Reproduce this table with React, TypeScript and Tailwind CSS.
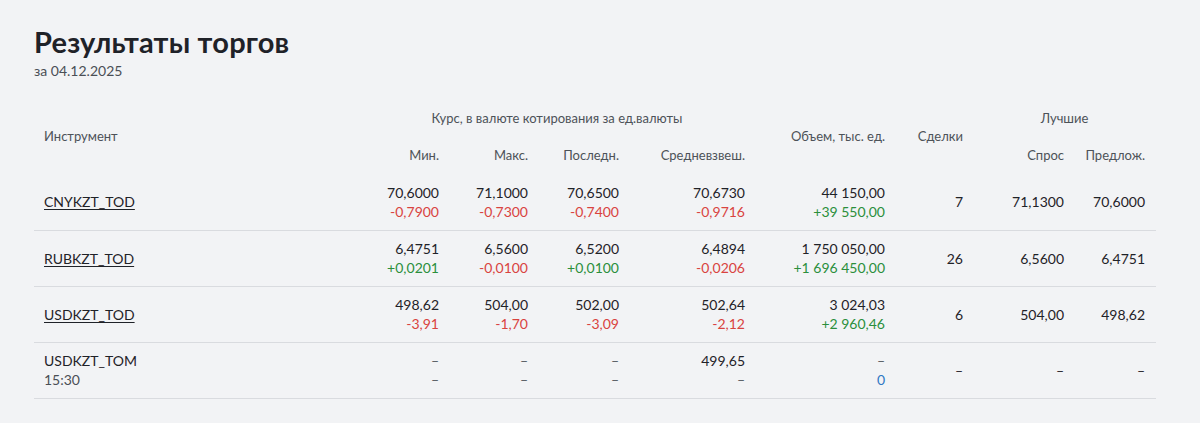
import React from "react";

type Val = { v: string; d: string; dc?: "red" | "green" | "blue" | "gray" };

interface Row {
  name: string;
  sub?: string;
  link: boolean;
  cells: Val[];
  deals: string;
  bid: string;
  ask: string;
}

const rows: Row[] = [
  {
    name: "CNYKZT_TOD",
    link: true,
    cells: [
      { v: "70,6000", d: "-0,7900", dc: "red" },
      { v: "71,1000", d: "-0,7300", dc: "red" },
      { v: "70,6500", d: "-0,7400", dc: "red" },
      { v: "70,6730", d: "-0,9716", dc: "red" },
      { v: "44 150,00", d: "+39 550,00", dc: "green" },
    ],
    deals: "7",
    bid: "71,1300",
    ask: "70,6000",
  },
  {
    name: "RUBKZT_TOD",
    link: true,
    cells: [
      { v: "6,4751", d: "+0,0201", dc: "green" },
      { v: "6,5600", d: "-0,0100", dc: "red" },
      { v: "6,5200", d: "+0,0100", dc: "green" },
      { v: "6,4894", d: "-0,0206", dc: "red" },
      { v: "1 750 050,00", d: "+1 696 450,00", dc: "green" },
    ],
    deals: "26",
    bid: "6,5600",
    ask: "6,4751",
  },
  {
    name: "USDKZT_TOD",
    link: true,
    cells: [
      { v: "498,62", d: "-3,91", dc: "red" },
      { v: "504,00", d: "-1,70", dc: "red" },
      { v: "502,00", d: "-3,09", dc: "red" },
      { v: "502,64", d: "-2,12", dc: "red" },
      { v: "3 024,03", d: "+2 960,46", dc: "green" },
    ],
    deals: "6",
    bid: "504,00",
    ask: "498,62",
  },
  {
    name: "USDKZT_TOM",
    sub: "15:30",
    link: false,
    cells: [
      { v: "–", d: "–", dc: "gray" },
      { v: "–", d: "–", dc: "gray" },
      { v: "–", d: "–", dc: "gray" },
      { v: "499,65", d: "–", dc: "gray" },
      { v: "–", d: "0", dc: "blue" },
    ],
    deals: "–",
    bid: "–",
    ask: "–",
  },
];

const diffColor = (c?: string) => {
  if (c === "red") return "text-[#d9433f]";
  if (c === "green") return "text-[#2b8f3c]";
  if (c === "blue") return "text-[#2f78c4]";
  return "text-[#555a60]";
};

export default function App() {
  return (
    <div className="min-h-screen bg-[#f2f3f5] px-[34px] pt-[24px] font-['Lato','Noto_Sans',sans-serif] text-[#1f2228]">
      <h1 className="text-[29px] leading-[36px] font-bold tracking-[0.2px]">Результаты торгов</h1>
      <div className="text-[14px] leading-[20px] text-[#4a4f55] mt-[1px]">за 04.12.2025</div>

      <table className="mt-[19px] w-[1122px] border-collapse table-fixed">
        <colgroup>
          <col className="w-[325px]" />
          <col className="w-[90px]" />
          <col className="w-[89px]" />
          <col className="w-[91px]" />
          <col className="w-[126px]" />
          <col className="w-[140px]" />
          <col className="w-[78px]" />
          <col className="w-[101px]" />
          <col className="w-[82px]" />
        </colgroup>
        <thead className="text-[13px] text-[#4d5258] font-normal">
          <tr className="h-[38px]">
            <th rowSpan={2} className="text-left font-normal pl-[10px] align-middle">
              Инструмент
            </th>
            <th colSpan={4} className="font-normal text-center align-middle">
              Курс, в валюте котирования за ед.валюты
            </th>
            <th rowSpan={2} className="font-normal text-right pr-[10px] align-middle">
              Объем, тыс. ед.
            </th>
            <th rowSpan={2} className="font-normal text-right pr-[10px] align-middle">
              Сделки
            </th>
            <th colSpan={2} className="font-normal text-center align-middle">
              Лучшие
            </th>
          </tr>
          <tr className="h-[36px]">
            <th className="font-normal text-right pr-[10px]">Мин.</th>
            <th className="font-normal text-right pr-[10px]">Макс.</th>
            <th className="font-normal text-right pr-[10px]">Последн.</th>
            <th className="font-normal text-right pr-[10px]">Средневзвеш.</th>
            <th className="font-normal text-right pr-[10px]">Спрос</th>
            <th className="font-normal text-right pr-[11px]">Предлож.</th>
          </tr>
        </thead>
        <tbody className="text-[14px] leading-[19px]">
          {rows.map((r, i) => (
            <tr key={r.name} className={`h-[56px] border-b border-[#d9dbdf] ${i === 0 ? "" : "border-t"}`}>
              <td className="pl-[10px] align-middle">
                {r.link ? (
                  <a href="#" className="underline underline-offset-[2px] text-[#1f2228]">
                    {r.name}
                  </a>
                ) : (
                  <div>
                    <div>{r.name}</div>
                    <div className="text-[#4a4f55]">{r.sub}</div>
                  </div>
                )}
              </td>
              {r.cells.map((c, j) => (
                <td key={j} className="text-right pr-[10px] align-middle">
                  <div className={c.v === "–" ? "text-[#555a60]" : ""}>{c.v}</div>
                  <div className={diffColor(c.dc)}>{c.d}</div>
                </td>
              ))}
              <td className="text-right pr-[10px] align-middle">{r.deals}</td>
              <td className="text-right pr-[10px] align-middle">{r.bid}</td>
              <td className="text-right pr-[11px] align-middle">{r.ask}</td>
            </tr>
          ))}
        </tbody>
      </table>
    </div>
  );
}
